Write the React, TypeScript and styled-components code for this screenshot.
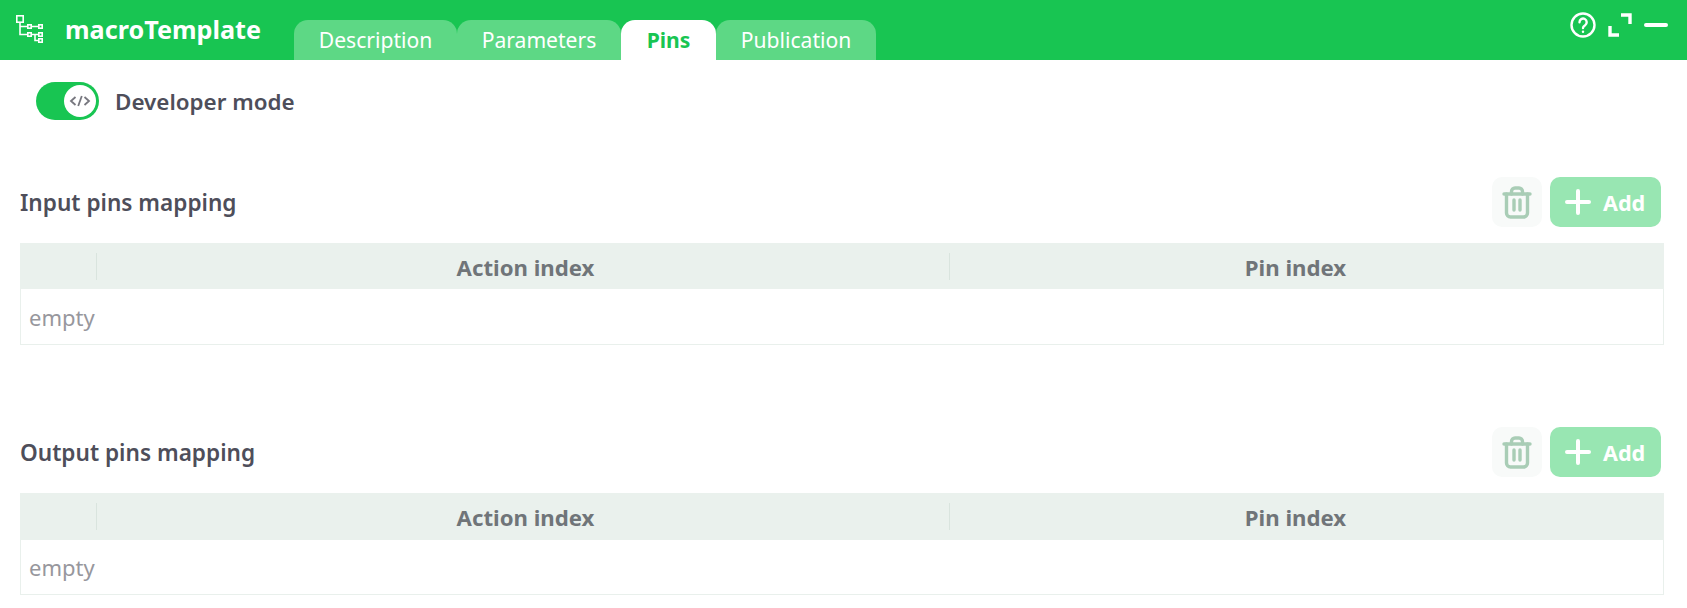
import React from 'react';
import styled, { createGlobalStyle } from 'styled-components';

const GlobalStyle = createGlobalStyle`
  html, body {
    margin: 0;
    padding: 0;
    background: #fff;
    font-family: "Noto Sans", sans-serif;
  }
`;

const Page = styled.div`
  width: 1687px;
  height: 608px;
  overflow: hidden;
`;

const Header = styled.header`
  height: 60px;
  background: #18c552;
  display: flex;
  align-items: flex-end;
  color: #fff;
`;

const Brand = styled.div`
  align-self: flex-start;
  height: 60px;
  width: 294px;
  flex-shrink: 0;
  padding: 15px 0 0 16px;
  box-sizing: border-box;
  display: flex;
  gap: 21px;
`;

const BrandTitle = styled.div`
  font-size: 25.2px;
  font-weight: 700;
  line-height: 34px;
  margin-top: -3px;
`;

const Tabs = styled.nav`
  display: flex;
  height: 40px;
  flex: 1;
`;

const Tab = styled.div<{ $active?: boolean; $width: number }>`
  width: ${({ $width }) => $width}px;
  height: 40px;
  box-sizing: border-box;
  border-radius: 14px 14px 0 0;
  background: ${({ $active }) => ($active ? '#fff' : '#5dd885')};
  color: ${({ $active }) => ($active ? '#18c552' : '#fff')};
  font-size: 21.1px;
  font-weight: ${({ $active }) => ($active ? 700 : 400)};
  line-height: 40px;
  text-align: center;
`;

const WindowButtons = styled.div`
  align-self: flex-start;
  display: flex;
  align-items: center;
  gap: 12px;
  padding: 12px 19px 0 0;
`;

const Content = styled.main`
  padding: 22px 23px 0 20px;
`;

const DevRow = styled.div`
  display: flex;
  align-items: center;
  height: 38px;
  padding-left: 16px;
  gap: 16px;
`;

const Toggle = styled.div`
  width: 63px;
  height: 38px;
  box-sizing: border-box;
  border-radius: 19px;
  background: #18c552;
  padding: 3px;
  display: flex;
  justify-content: flex-end;
`;

const Knob = styled.div`
  width: 32px;
  height: 32px;
  border-radius: 50%;
  background: #fff;
  display: flex;
  align-items: center;
  justify-content: center;
`;

const DevLabel = styled.div`
  font-size: 22.4px;
  font-weight: 600;
  color: #4e4e5a;
`;

const Section = styled.section<{ $top: number }>`
  margin-top: ${({ $top }) => $top}px;
`;

const SectionHead = styled.div`
  display: flex;
  align-items: center;
  justify-content: space-between;
  height: 50px;
  margin-bottom: 16px;
`;

const SectionTitle = styled.h2`
  margin: 0;
  padding-top: 1px;
  font-size: 22.6px;
  font-weight: 600;
  color: #4e4e5a;
`;

const Actions = styled.div`
  display: flex;
  gap: 8px;
  margin-right: 3px;
`;

const TrashButton = styled.button`
  width: 50px;
  height: 50px;
  padding: 0;
  border: none;
  border-radius: 10px;
  background: #f8faf9;
  display: flex;
  align-items: center;
  justify-content: center;
`;

const AddButton = styled.button`
  width: 111px;
  height: 50px;
  padding: 0 0 0 15px;
  border: none;
  border-radius: 10px;
  background: #98e6b2;
  color: #fff;
  font-family: inherit;
  font-size: 21.6px;
  font-weight: 700;
  display: flex;
  align-items: center;
  gap: 12px;
`;

const Table = styled.div`
  width: 1644px;
  box-sizing: border-box;
  border: 1px solid #e9f0ec;
  border-top: none;
`;

const TableHead = styled.div<{ $height: number }>`
  height: ${({ $height }) => $height}px;
  margin: 0 -1px;
  padding-right: 23px;
  background: #eaf1ed;
  display: grid;
  grid-template-columns: 77px 853px 1fr;
  align-items: center;
  color: #707579;
  font-size: 22.2px;
  font-weight: 700;
  text-align: center;
`;

const HeadCell = styled.div<{ $divider?: boolean; $offset?: number }>`
  height: 27px;
  box-sizing: border-box;
  padding-left: ${({ $offset }) => $offset ?? 0}px;
  line-height: 29px;
  border-right: ${({ $divider }) => ($divider ? '1px solid #d9e4de' : 'none')};
`;

const TableBody = styled.div<{ $height: number }>`
  height: ${({ $height }) => $height}px;
  padding-left: 8px;
  color: #97979d;
  font-size: 22px;
  line-height: ${({ $height }) => $height * 2 - 53}px;
`;

const TreeIcon = () => (
  <svg width="28" height="28" viewBox="0 0 28 28" fill="none" stroke="#fff" strokeWidth="1.6">
    <rect x="0.8" y="0.8" width="6.4" height="6.4" />
    <rect x="11.8" y="9.8" width="3.4" height="3.4" />
    <rect x="11.8" y="17.8" width="3.4" height="3.4" />
    <rect x="22.8" y="9.8" width="3.4" height="3.4" />
    <rect x="22.8" y="17.8" width="3.4" height="3.4" />
    <rect x="22.8" y="23.8" width="3.4" height="3.4" />
    <path d="M4 7v12.5h7M4 11.5h7M16 11.5h6M16 19.5h6M19 19.5v6h3" />
  </svg>
);

const HelpIcon = () => (
  <svg width="26" height="26" viewBox="0 0 26 26" fill="none" stroke="#fff" strokeWidth="2.4" strokeLinecap="round">
    <circle cx="13" cy="13" r="11.5" />
    <path d="M9.5 10.2a3.6 3.6 0 1 1 5.6 3c-1.3.8-2.1 1.4-2.1 2.8" />
    <path d="M13 19.6v.1" />
  </svg>
);

const ExpandIcon = () => (
  <svg width="24" height="24" viewBox="0 0 24 24" fill="none" stroke="#fff" strokeWidth="3.4">
    <path d="M13 2h9v9" />
    <path d="M2 13v9h9" />
  </svg>
);

const MinimizeIcon = () => (
  <svg width="24" height="24" viewBox="0 0 24 24" fill="none" stroke="#fff" strokeWidth="4" strokeLinecap="round">
    <path d="M2 12h20" />
  </svg>
);

const CodeIcon = () => (
  <svg width="22" height="14" viewBox="0 0 22 14" fill="none" stroke="#77777f" strokeWidth="1.8">
    <path d="M6.5 3L2 7l4.5 4" />
    <path d="M12.8 2L9.2 12" />
    <path d="M15.5 3L20 7l-4.5 4" />
  </svg>
);

const TrashIcon = () => (
  <svg width="30" height="33" viewBox="0 0 30 33" fill="none" stroke="#a9cdb6" strokeWidth="3.4" strokeLinecap="round" strokeLinejoin="round">
    <path d="M2 8h26" />
    <path d="M9.5 8V5.5a3.5 3.5 0 0 1 3.5-3.5h4a3.5 3.5 0 0 1 3.5 3.5V8" />
    <path d="M4.5 8v19a4 4 0 0 0 4 4h13a4 4 0 0 0 4-4V8" />
    <path d="M12 14v10M18 14v10" />
  </svg>
);

const PlusIcon = () => (
  <svg width="26" height="26" viewBox="0 0 26 26" fill="none" stroke="#fff" strokeWidth="4" strokeLinecap="round">
    <path d="M13 2v22M2 13h22" />
  </svg>
);

type MappingProps = {
  title: string;
  top: number;
  headHeight: number;
};

const Mapping: React.FC<MappingProps> = ({ title, top, headHeight }) => (
  <Section $top={top}>
    <SectionHead>
      <SectionTitle>{title}</SectionTitle>
      <Actions>
        <TrashButton>
          <TrashIcon />
        </TrashButton>
        <AddButton>
          <PlusIcon />
          Add
        </AddButton>
      </Actions>
    </SectionHead>
    <Table>
      <TableHead $height={headHeight}>
        <HeadCell $divider />
        <HeadCell $divider $offset={5}>Action index</HeadCell>
        <HeadCell>Pin index</HeadCell>
      </TableHead>
      <TableBody $height={101 - headHeight}>empty</TableBody>
    </Table>
  </Section>
);

const tabs = [
  { label: 'Description', width: 163 },
  { label: 'Parameters', width: 164 },
  { label: 'Pins', width: 95, active: true },
  { label: 'Publication', width: 160 },
];

export default function App() {
  return (
    <Page>
      <GlobalStyle />
      <Header>
        <Brand>
          <TreeIcon />
          <BrandTitle>macroTemplate</BrandTitle>
        </Brand>
        <Tabs>
          {tabs.map(t => (
            <Tab key={t.label} $active={t.active} $width={t.width}>
              {t.label}
            </Tab>
          ))}
        </Tabs>
        <WindowButtons>
          <HelpIcon />
          <ExpandIcon />
          <MinimizeIcon />
        </WindowButtons>
      </Header>
      <Content>
        <DevRow>
          <Toggle>
            <Knob>
              <CodeIcon />
            </Knob>
          </Toggle>
          <DevLabel>Developer mode</DevLabel>
        </DevRow>
        <Mapping title="Input pins mapping" top={57} headHeight={46} />
        <Mapping title="Output pins mapping" top={82} headHeight={47} />
      </Content>
    </Page>
  );
}
